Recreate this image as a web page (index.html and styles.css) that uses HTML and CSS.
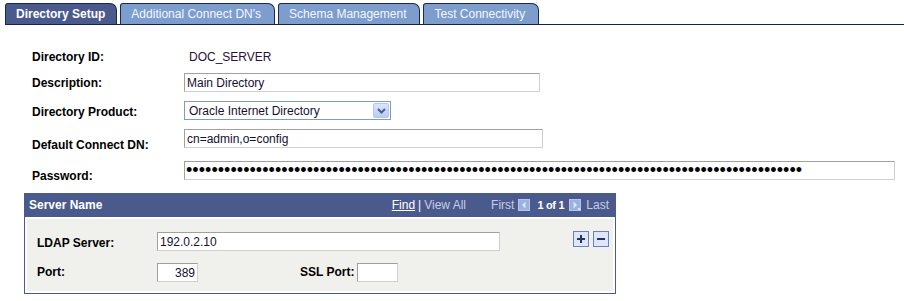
FILE: index.html
```html
<!DOCTYPE html>
<html>

<head>
    <meta charset="UTF-8">
    <title>Directory Setup</title>
    <link rel="stylesheet" href="styles.css">
</head>

<body>
    <div class="tabs">
        <div class="tab active">Directory Setup</div>
        <div class="tab">Additional Connect DN's</div>
        <div class="tab">Schema Management</div>
        <div class="tab">Test Connectivity</div>
    </div>

    <form class="setup">
        <div class="row r-id">
            <span class="lbl">Directory ID:</span>
            <span class="val">DOC_SERVER</span>
        </div>
        <div class="row r-desc">
            <label class="lbl" for="descr">Description:</label>
            <input id="descr" class="fld w-desc" type="text" value="Main Directory">
        </div>
        <div class="row r-prod">
            <span class="lbl">Directory Product:</span>
            <div class="select">
                <span class="sel-text">Oracle Internet Directory</span>
                <span class="drop">
                    <svg width="9" height="6" viewBox="0 0 9 6">
                        <path d="M1 1 L4.5 4.5 L8 1" fill="none" stroke="#4d6185" stroke-width="2" />
                    </svg>
                </span>
            </div>
        </div>
        <div class="row r-dn">
            <label class="lbl" for="dn">Default Connect DN:</label>
            <input id="dn" class="fld w-dn" type="text" value="cn=admin,o=config">
        </div>
        <div class="row r-pw">
            <label class="lbl" for="pw">Password:</label>
            <input id="pw" class="fld w-pw pw" type="password" value="ppppppppppppppppppppppppppppppppppppppppppppppppppppppppppppppppppppppppppppppppppppppppppppppppp">
        </div>
    </form>

    <div class="grid-box">
        <div class="grid-head">
            <span class="title">Server Name</span>
            <span class="nav">
                <a class="find">Find</a><span class="sep">|</span><span class="dim">View All</span>
                <span class="dim first">First</span>
                <svg class="arrow prev" width="12" height="12" viewBox="0 0 12 12">
                    <rect width="12" height="12" fill="#9bb1de" />
                    <rect x="0.5" y="0.5" width="11" height="11" fill="none" stroke="#b4c6ec" />
                    <path d="M7.5 2.5 L4 6 L7.5 9.5 Z" fill="#dde6f7" />
                </svg>
                <b class="count">1 of 1</b>
                <svg class="arrow next" width="12" height="12" viewBox="0 0 12 12">
                    <rect width="12" height="12" fill="#9bb1de" />
                    <rect x="0.5" y="0.5" width="11" height="11" fill="none" stroke="#b4c6ec" />
                    <path d="M4.5 2.5 L8 6 L4.5 9.5 Z" fill="#dde6f7" />
                    <rect x="9" y="9" width="2" height="2" fill="#dde6f7" />
                </svg>
                <span class="dim">Last</span>
            </span>
        </div>
        <div class="grid-body">
            <div class="grid-inner">
                <div class="grow g-ldap">
                    <label class="lbl" for="ldap">LDAP Server:</label>
                    <input id="ldap" class="fld w-ldap" type="text" value="192.0.2.10">
                    <span class="row-btns">
                        <span class="rbtn">
                            <svg width="14" height="14" viewBox="0 0 14 14">
                                <path d="M7 3 V11 M3 7 H11" stroke="#24336e" stroke-width="2" />
                            </svg>
                        </span>
                        <span class="rbtn">
                            <svg width="14" height="14" viewBox="0 0 14 14">
                                <path d="M3 7 H11" stroke="#24336e" stroke-width="2" />
                            </svg>
                        </span>
                    </span>
                </div>
                <div class="grow g-port">
                    <label class="lbl" for="port">Port:</label>
                    <input id="port" class="fld w-port num" type="text" value="389">
                    <label class="lbl ssl" for="ssl">SSL Port:</label>
                    <input id="ssl" class="fld w-port" type="text" value="">
                </div>
            </div>
        </div>
    </div>
</body>

</html>
```

FILE: styles.css
```css
html {
    font-size: 12px;
    font-family: 'Liberation Sans', Arial, sans-serif;
}

body {
    margin: 0;
    background-color: #ffffff;
    color: #000000;
    line-height: 14px;
}

/* tab strip */
.tabs {
    display: flex;
    gap: 3px;
    margin: 3px 0 0 5px;
    border-bottom: 1px solid #1a2440;
    height: 21px;
}

.tab {
    box-sizing: border-box;
    height: 21px;
    padding: 2px 13px 0 10px;
    line-height: 17px;
    background-color: #7d9dcc;
    color: #f4f7ff;
    border: 1px solid #1c2a50;
    border-bottom: none;
    border-radius: 3px 7px 0 0;
    white-space: nowrap;
}

.tab.active {
    background-color: #4b5a8c;
    color: #ffffff;
    font-weight: bold;
    padding-right: 11px;
}

/* main fields */
.setup {
    display: flex;
    flex-direction: column;
    gap: 9px;
    padding: 25px 0 0 32px;
    margin: 0;
}

.row {
    display: grid;
    grid-template-columns: 152px auto;
    align-items: start;
}

.lbl {
    font-weight: bold;
    white-space: nowrap;
}

.val {
    padding-left: 5px;
    color: #2a1038;
}

.r-desc .lbl {
    padding-top: 3px;
}

.r-prod .lbl {
    padding-top: 4px;
}

.r-dn .lbl {
    padding-top: 9px;
}

.r-pw .lbl {
    padding-top: 8px;
}

.fld {
    box-sizing: border-box;
    height: 19px;
    margin: 0;
    padding: 0 2px;
    font-family: inherit;
    font-size: 12px;
    color: #141030;
    background-color: #ffffff;
    border: 1px solid;
    border-color: #a0a0a0 #d0d0d0 #d0d0d0 #a0a0a0;
    outline: none;
}

.w-desc {
    width: 356px;
}

.w-dn {
    width: 359px;
}

.w-pw {
    width: 711px;
}

.pw {
    font-size: 18px;
    letter-spacing: 0.05px;
    color: #000000;
    padding-left: 1px;
}

.select {
    box-sizing: border-box;
    display: flex;
    align-items: center;
    justify-content: space-between;
    width: 207px;
    height: 19px;
    border: 1px solid #7f9db9;
    background-color: #ffffff;
    padding: 0 1px 0 4px;
    color: #141030;
}

.drop {
    display: flex;
    align-items: center;
    justify-content: center;
    box-sizing: border-box;
    width: 16px;
    height: 15px;
    background: linear-gradient(#dbe5fd, #b9cbf6);
    border: 1px solid #b3c6ef;
    border-radius: 2px;
}

/* scroll area */
.grid-box {
    width: 592px;
    margin: 10px 0 0 24px;
}

.grid-head {
    display: flex;
    align-items: center;
    justify-content: space-between;
    height: 24px;
    padding: 0 7px 0 5px;
    background-color: #4b5a8c;
    color: #ffffff;
}

.title {
    font-weight: bold;
}

.nav {
    display: flex;
    align-items: center;
    white-space: nowrap;
}

.find {
    color: #ffffff;
    text-decoration: underline;
}

.sep {
    color: #ffffff;
    padding: 0 3px;
}

.dim {
    color: #c6cee6;
}

.first {
    margin: 0 4px 0 25px;
}

.arrow.prev {
    margin-right: 7px;
}

.arrow.next {
    margin: 0 5px;
}

.count {
    color: #ffffff;
    font-size: 11px;
    letter-spacing: -0.3px;
}

.grid-body {
    border: 1px solid #4b5a8c;
    border-top: none;
    padding: 2px;
    background-color: #ffffff;
}

.grid-inner {
    display: flex;
    flex-direction: column;
    gap: 12px;
    padding: 13px 4px 9px 10px;
    background-color: #f0f0ec;
}

.grow {
    display: flex;
    align-items: flex-start;
}

.grow>.lbl:first-child {
    width: 120px;
}

.g-ldap .lbl {
    padding-top: 4px;
}

.g-port .lbl {
    padding-top: 2px;
}

.w-ldap {
    width: 343px;
}

.w-port {
    width: 41px;
}

.num {
    text-align: right;
}

.ssl {
    margin-left: 102px;
    margin-right: 3px;
}

.row-btns {
    display: flex;
    gap: 4px;
    margin: -1px 0 0 auto;
}

.rbtn {
    display: flex;
    align-items: center;
    justify-content: center;
    box-sizing: border-box;
    width: 16px;
    height: 16px;
    border: 1px solid #6a7fc6;
    background-color: #dfe6f7;
}
```
